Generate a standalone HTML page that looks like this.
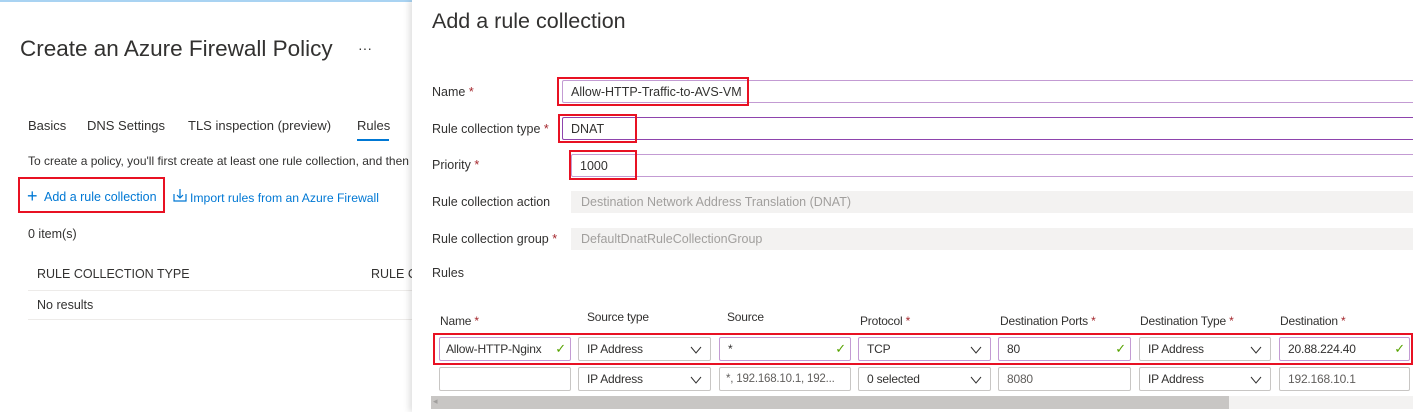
<!DOCTYPE html>
<html><head><style>
body{margin:0;width:1413px;height:412px;overflow:hidden;background:#fff;font-family:"Liberation Sans",sans-serif;color:#323130;position:relative}
.a{position:absolute;white-space:nowrap}
.s{font-size:12.5px}
.req{color:#a4262c}
.inp{position:absolute;box-sizing:border-box;border:1px solid #c8c6c4;background:#fff;font-size:12.5px;padding-left:8px;line-height:22px;color:#323130;border-radius:2px;overflow:hidden}
.t{font-size:12px;letter-spacing:-0.2px}
.pur{border-color:#c39bd3}
.dis{position:absolute;background:#f3f2f1;font-size:12.5px;color:#a19f9d;padding-left:10px;line-height:22px;box-sizing:border-box}
.red{position:absolute;border:2px solid #e81123;box-sizing:border-box}
.ck{position:absolute;right:4px;top:0;color:#57a300;font-size:13px}
.dd{position:absolute;right:8px;top:8px;width:12px;height:8px}
</style></head><body>
<div class="a" style="left:0;top:0;width:412px;height:2px;background:#a9d3f2"></div>
<div class="a" style="left:20px;top:36px;font-size:22.5px;color:#323130">Create an Azure Firewall Policy</div>
<div class="a" style="left:358px;top:40px;font-size:14px">···</div>
<div class="a" style="left:28px;top:118px;font-size:13px">Basics</div>
<div class="a" style="left:87px;top:118px;font-size:13px">DNS Settings</div>
<div class="a" style="left:188px;top:118px;font-size:13px">TLS inspection (preview)</div>
<div class="a" style="left:357px;top:118px;font-size:13px">Rules</div>
<div class="a" style="left:357px;top:139px;width:32px;height:2px;background:#0078d4"></div>
<div class="a" style="left:28px;top:154px;font-size:12px">To create a policy, you'll first create at least one rule collection, and then</div>
<div class="red" style="left:18px;top:177px;width:147px;height:36px"></div>
<div class="a" style="left:27px;top:186px;font-size:18px;color:#0078d4;font-weight:300">+</div>
<div class="a s" style="left:44px;top:190px;color:#0078d4">Add a rule collection</div>
<svg class="a" style="left:173px;top:188px" width="14" height="14" viewBox="0 0 14 14"><path d="M1 6v7h12V6M7 1v9M4 7l3 3 3-3" fill="none" stroke="#0078d4" stroke-width="1.2"/></svg>
<div class="a" style="left:190px;top:191px;color:#0078d4;font-size:12.2px">Import rules from an Azure Firewall</div>
<div class="a s" style="left:28px;top:227px">0 item(s)</div>
<div class="a s" style="left:37px;top:267px">RULE COLLECTION TYPE</div>
<div class="a s" style="left:371px;top:267px">RULE CO</div>
<div class="a" style="left:28px;top:290px;width:390px;height:1px;background:#edebe9"></div>
<div class="a s" style="left:37px;top:298px">No results</div>
<div class="a" style="left:28px;top:319px;width:390px;height:1px;background:#edebe9"></div>

<div class="a" style="left:412px;top:0;width:1001px;height:412px;background:#fff;box-shadow:-3px 0 6px rgba(0,0,0,.12)"></div>
<div class="a" style="left:432px;top:9px;font-size:21.5px">Add a rule collection</div>
<div class="a s" style="left:432px;top:85px">Name <span class="req">*</span></div>
<div class="a s" style="left:432px;top:122px">Rule collection type <span class="req">*</span></div>
<div class="a s" style="left:432px;top:158px">Priority <span class="req">*</span></div>
<div class="a s" style="left:432px;top:195px">Rule collection action</div>
<div class="a s" style="left:432px;top:232px">Rule collection group <span class="req">*</span></div>
<div class="a s" style="left:432px;top:266px">Rules</div>
<div class="inp pur" style="left:562px;top:80px;width:860px;height:23px">Allow-HTTP-Traffic-to-AVS-VM</div>
<div class="inp" style="left:562px;top:117px;width:860px;height:23px;border-color:#8e44ad">DNAT</div>
<div class="inp pur" style="left:571px;top:154px;width:850px;height:23px">1000</div>
<div class="dis" style="left:571px;top:191px;width:842px;height:22px">Destination Network Address Translation (DNAT)</div>
<div class="dis" style="left:571px;top:228px;width:842px;height:22px">DefaultDnatRuleCollectionGroup</div>
<div class="red" style="left:557px;top:77px;width:192px;height:29px"></div>
<div class="red" style="left:558px;top:114px;width:79px;height:29px"></div>
<div class="red" style="left:569px;top:150px;width:68px;height:30px"></div>

<div class="a t" style="left:440px;top:314px">Name <span class="req">*</span></div>
<div class="a t" style="left:587px;top:310px">Source type</div>
<div class="a t" style="left:727px;top:310px">Source</div>
<div class="a t" style="left:860px;top:314px">Protocol <span class="req">*</span></div>
<div class="a t" style="left:1000px;top:314px">Destination Ports <span class="req">*</span></div>
<div class="a t" style="left:1140px;top:314px">Destination Type <span class="req">*</span></div>
<div class="a t" style="left:1280px;top:314px">Destination <span class="req">*</span></div>

<div class="inp pur t" style="left:439px;top:337px;width:132px;height:24px;padding-left:6px">Allow-HTTP-Nginx<span class="ck">✓</span></div>
<div class="inp t" style="left:578px;top:337px;width:133px;height:24px">IP Address<svg class="dd" viewBox="0 0 12 8"><path d="M1 1l5 6 5-6" fill="none" stroke="#323130"/></svg></div>
<div class="inp pur t" style="left:719px;top:337px;width:132px;height:24px">*<span class="ck">✓</span></div>
<div class="inp pur t" style="left:858px;top:337px;width:133px;height:24px">TCP<svg class="dd" viewBox="0 0 12 8"><path d="M1 1l5 6 5-6" fill="none" stroke="#323130"/></svg></div>
<div class="inp pur t" style="left:998px;top:337px;width:133px;height:24px">80<span class="ck">✓</span></div>
<div class="inp t" style="left:1139px;top:337px;width:132px;height:24px">IP Address<svg class="dd" viewBox="0 0 12 8"><path d="M1 1l5 6 5-6" fill="none" stroke="#323130"/></svg></div>
<div class="inp pur t" style="left:1279px;top:337px;width:131px;height:24px">20.88.224.40<span class="ck">✓</span></div>
<div class="red" style="left:433px;top:333px;width:980px;height:32px"></div>

<div class="inp" style="left:439px;top:367px;width:132px;height:24px"></div>
<div class="inp t" style="left:578px;top:367px;width:133px;height:24px">IP Address<svg class="dd" viewBox="0 0 12 8"><path d="M1 1l5 6 5-6" fill="none" stroke="#323130"/></svg></div>
<div class="inp t" style="left:719px;top:367px;width:132px;height:24px;color:#605e5c;font-size:11.5px;padding-left:6px">*, 192.168.10.1, 192...</div>
<div class="inp t" style="left:858px;top:367px;width:133px;height:24px">0 selected<svg class="dd" viewBox="0 0 12 8"><path d="M1 1l5 6 5-6" fill="none" stroke="#323130"/></svg></div>
<div class="inp t" style="left:998px;top:367px;width:133px;height:24px;color:#605e5c">8080</div>
<div class="inp t" style="left:1139px;top:367px;width:132px;height:24px">IP Address<svg class="dd" viewBox="0 0 12 8"><path d="M1 1l5 6 5-6" fill="none" stroke="#323130"/></svg></div>
<div class="inp t" style="left:1279px;top:367px;width:131px;height:24px;color:#605e5c">192.168.10.1</div>

<div class="a" style="left:431px;top:396px;width:982px;height:13px;background:#f3f2f1"></div>
<div class="a" style="left:431px;top:396px;width:798px;height:13px;background:#c8c6c4"></div>
<div class="a" style="left:433px;top:396px;font-size:9px;color:#a19f9d">◂</div>
</body></html>
